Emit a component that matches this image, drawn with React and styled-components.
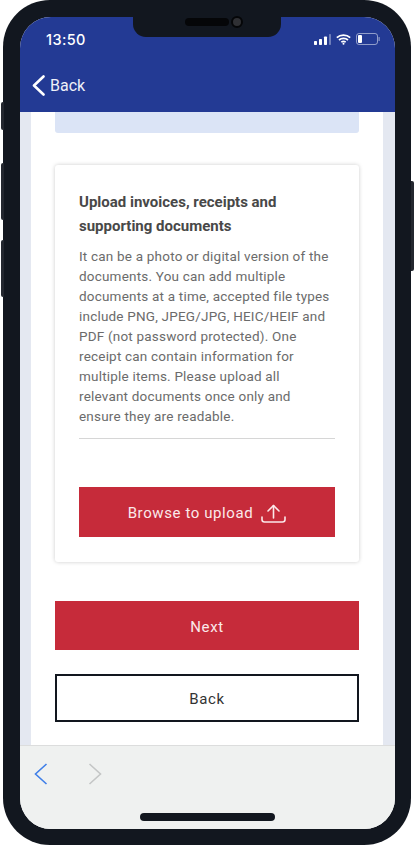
import styled, { createGlobalStyle } from 'styled-components';

const GlobalStyle = createGlobalStyle`
    html, body {
        margin: 0;
        padding: 0;
        background: #fff;
        font-family: "Roboto", "Liberation Sans", sans-serif;
    }
    * {
        box-sizing: border-box;
    }
`

const Page = styled.div`
    width: 414px;
    height: 845px;
    padding-left: 3px;
    overflow: hidden;
`

const Phone = styled.div`
    position: relative;
    width: 408px;
    height: 845px;
    padding: 17px 16px 16px 17px;
    background-color: #12171f;
    border-radius: 47px;
`

const SideButton = styled.span`
    position: absolute;
    top: ${props => props.top}px;
    height: ${props => props.size}px;
    width: 3px;
    background-color: #23272f;
    ${props => props.right ? 'right: -3px; border-radius: 0 2px 2px 0;' : 'left: -2px; border-radius: 2px 0 0 2px;'}
`

const Notch = styled.div`
    position: absolute;
    top: 17px;
    left: 130px;
    width: 148px;
    height: 20px;
    background-color: #12171f;
    border-radius: 0 0 13px 13px;
`

const Speaker = styled.span`
    position: absolute;
    top: 1px;
    left: 52px;
    width: 44px;
    height: 8px;
    border-radius: 4px;
    background-color: #050608;
`

const Camera = styled.span`
    position: absolute;
    top: -1px;
    left: 98px;
    width: 12px;
    height: 12px;
    border-radius: 50%;
    background-color: #2f3034;
    border: 2px solid #050608;
`

const Screen = styled.div`
    display: flex;
    flex-direction: column;
    height: 812px;
    border-radius: 31px;
    overflow: hidden;
    background-color: #fff;
`

const Header = styled.header`
    display: flex;
    flex-direction: column;
    flex: 0 0 95px;
    background-color: #233a94;
    color: #fff;
`

const StatusBar = styled.div`
    display: flex;
    align-items: center;
    justify-content: space-between;
    height: 16px;
    margin-top: 14px;
    padding: 0 15px 0 26px;
`

const Clock = styled.span`
    font-family: "Inter", sans-serif;
    font-size: 14.5px;
    font-weight: 500;
    letter-spacing: 0.4px;
`

const StatusIcons = styled.div`
    display: flex;
    align-items: center;
    gap: 5px;
`

const BackLink = styled.div`
    display: flex;
    align-items: center;
    gap: 5px;
    margin-top: 28px;
    padding-left: 12px;
    font-size: 16px;
    color: #eef0f8;
`

const Content = styled.main`
    flex: 1;
    padding: 0 12px 0 11px;
    background-color: #e4e8f1;
`

const Sheet = styled.div`
    height: 100%;
    padding: 0 24px;
    background-color: #fff;
`

const InfoBox = styled.div`
    height: 21px;
    background-color: #dbe4f6;
    border-radius: 0 0 3px 3px;
`

const Card = styled.section`
    height: 397px;
    margin-top: 32px;
    padding: 25px 24px 0;
    background-color: #fff;
    border-radius: 3px;
    box-shadow: 0 0 4px rgba(0, 0, 0, 0.2);
`

const CardTitle = styled.h2`
    margin: 0 0 8px;
    font-size: 15px;
    font-weight: 700;
    line-height: 24px;
    color: #484848;
`

const CardText = styled.p`
    margin: 0;
    padding-bottom: 12px;
    font-size: 13.5px;
    line-height: 20px;
    letter-spacing: 0.2px;
    white-space: nowrap;
    color: #6b6b6b;
    border-bottom: 1px solid #d6d6d6;
`

const Button = styled.button`
    display: flex;
    align-items: center;
    justify-content: center;
    gap: ${props => props.gap || 0}px;
    width: 100%;
    height: ${props => props.height}px;
    margin-top: ${props => props.top}px;
    padding: 2px 0 0;
    font-family: inherit;
    font-size: 15px;
    letter-spacing: 0.6px;
    border-radius: 0;
    color: ${props => props.outline ? '#333' : '#fbe9ea'};
    background-color: ${props => props.outline ? '#fff' : '#c62b3a'};
    border: ${props => props.outline ? '2px solid #12171f' : 'none'};
`

const Toolbar = styled.footer`
    position: relative;
    display: flex;
    gap: 40px;
    flex: 0 0 84px;
    padding: 17px 0 0 14px;
    background-color: #eff1f0;
    border-top: 1px solid #dcdddd;
`

const HomeBar = styled.span`
    position: absolute;
    left: 120px;
    bottom: 8px;
    width: 135px;
    height: 8px;
    border-radius: 4px;
    background-color: #12171f;
`

const Signal = () => (
    <svg width="17" height="11" viewBox="0 0 17 11">
        <rect x="0" y="7" width="3" height="4" rx="0.7" fill="#fff" />
        <rect x="5" y="5" width="3" height="6" rx="0.7" fill="#fff" />
        <rect x="10" y="2.5" width="3" height="8.5" rx="0.7" fill="#fff" />
        <rect x="15" y="0" width="2" height="11" rx="0.7" fill="#fff" opacity="0.35" />
    </svg>
)

const Wifi = () => (
    <svg width="15" height="11" viewBox="0 0 15 11" fill="none" stroke="#fff" strokeWidth="1.7">
        <path d="M0.8 3.6C4.5 0.2 10.5 0.2 14.2 3.6" />
        <path d="M3 6C5.5 3.8 9.5 3.8 12 6" />
        <path d="M5.3 8.2C6.6 7.2 8.4 7.2 9.7 8.2" />
        <circle cx="7.5" cy="9.7" r="1" fill="#fff" stroke="none" />
    </svg>
)

const Battery = () => (
    <svg width="24" height="12" viewBox="0 0 24 12">
        <rect x="0.5" y="0.5" width="21" height="11" rx="2.5" fill="none" stroke="#fff" strokeOpacity="0.5" />
        <rect x="2" y="2" width="4" height="8" rx="1" fill="#fff" />
        <rect x="22.5" y="4" width="1.2" height="4" rx="0.6" fill="#fff" opacity="0.5" />
    </svg>
)

const UploadIcon = () => (
    <svg width="25" height="19" viewBox="0 0 25 19" fill="none" stroke="#fbe9ea" strokeWidth="1.6" strokeLinecap="round" strokeLinejoin="round">
        <path d="M12.5 14V1.5" />
        <path d="M7 7L12.5 1.5L18 7" />
        <path d="M1 13V15.5C1 17 1.8 18 3.5 18H21.5C23.2 18 24 17 24 15.5V13" />
    </svg>
)

const Chevron = ({ flip, color, width = 1.6 }) => (
    <svg width="14" height="22" viewBox="0 0 14 22" fill="none" stroke={color} strokeWidth={width} style={flip ? { transform: 'scaleX(-1)' } : undefined}>
        <path d="M12.5 1L1.5 11L12.5 21" />
    </svg>
)

const App = () => {
    return (
        <Page>
            <GlobalStyle />
            <Phone>
                <SideButton top={102} size={28} />
                <SideButton top={163} size={57} />
                <SideButton top={240} size={57} />
                <SideButton right top={181} size={90} />
                <Notch>
                    <Speaker />
                    <Camera />
                </Notch>
                <Screen>
                    <Header>
                        <StatusBar>
                            <Clock>13:50</Clock>
                            <StatusIcons>
                                <Signal />
                                <Wifi />
                                <Battery />
                            </StatusIcons>
                        </StatusBar>
                        <BackLink>
                            <svg width="13" height="21" viewBox="0 0 13 21" fill="none" stroke="#fff" strokeWidth="2.6" strokeLinecap="round" strokeLinejoin="round">
                                <path d="M11.5 1.5L2 10.5L11.5 19.5" />
                            </svg>
                            Back
                        </BackLink>
                    </Header>
                    <Content>
                        <Sheet>
                            <InfoBox />
                            <Card>
                                <CardTitle>Upload invoices, receipts and<br />supporting documents</CardTitle>
                                <CardText>
                                    It can be a photo or digital version of the<br />
                                    documents. You can add multiple<br />
                                    documents at a time, accepted file types<br />
                                    include PNG, JPEG/JPG, HEIC/HEIF and<br />
                                    PDF (not password protected). One<br />
                                    receipt can contain information for<br />
                                    multiple items. Please upload all<br />
                                    relevant documents once only and<br />
                                    ensure they are readable.
                                </CardText>
                                <Button height={50} top={48} gap={8}>Browse to upload <UploadIcon /></Button>
                            </Card>
                            <Button height={49} top={39}>Next</Button>
                            <Button outline height={48} top={24}>Back</Button>
                        </Sheet>
                    </Content>
                    <Toolbar>
                        <Chevron color="#3f7fe8" />
                        <Chevron flip color="#c4c6c6" />
                        <HomeBar />
                    </Toolbar>
                </Screen>
            </Phone>
        </Page>
    )
}

export default App
